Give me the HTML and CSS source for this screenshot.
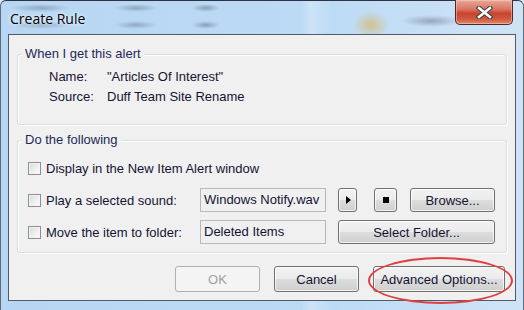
FILE: index.html
```html
<!DOCTYPE html>
<html lang="en">
<head>
    <meta charset="UTF-8">
    <title>Create Rule</title>
    <link rel="stylesheet" href="styles.css">
</head>
<body>
    <div class="window">
        <!-- Title bar -->
        <div class="titlebar">
            <span class="title">Create Rule</span>
            <button class="close" aria-label="Close">
                <svg width="17" height="13" viewBox="0 0 17 13">
                    <path d="M3 2 L14 11 M14 2 L3 11" stroke="#3b3b4a" stroke-width="4.6" stroke-linecap="square" fill="none"/>
                    <path d="M3 2 L14 11 M14 2 L3 11" stroke="#ffffff" stroke-width="2.6" stroke-linecap="square" fill="none"/>
                </svg>
            </button>
        </div>

        <div class="client">
            <!-- Alert details -->
            <div class="group alert-group">
                <span class="legend">When I get this alert</span>
                <div class="info">
                    <span>Name:</span><span>"Articles Of Interest"</span>
                    <span>Source:</span><span>Duff Team Site Rename</span>
                </div>
            </div>

            <!-- Actions -->
            <div class="group action-group">
                <span class="legend">Do the following</span>
                <div class="actions">
                    <div class="action-row">
                        <label class="check"><span class="box"></span>Display in the New Item Alert window</label>
                    </div>
                    <div class="action-row">
                        <label class="check"><span class="box"></span>Play a selected sound:</label>
                        <span class="field">Windows Notify.wav</span>
                        <button class="btn btn-play" aria-label="Play"><span class="play-icon"></span></button>
                        <button class="btn btn-stop" aria-label="Stop"><span class="stop-icon"></span></button>
                        <button class="btn btn-browse">Browse...</button>
                    </div>
                    <div class="action-row">
                        <label class="check"><span class="box"></span>Move the item to folder:</label>
                        <span class="field">Deleted Items</span>
                        <button class="btn btn-folder">Select Folder...</button>
                    </div>
                </div>
            </div>

            <!-- Dialog buttons -->
            <div class="dialog-buttons">
                <button class="btn btn-dialog" disabled>OK</button>
                <button class="btn btn-dialog">Cancel</button>
                <button class="btn btn-advanced">Advanced Options...<span class="ring"></span></button>
            </div>
        </div>
    </div>
</body>
</html>
```

FILE: styles.css
```css
body {
    margin: 0;
    padding: 0;
    background: #dbe8f4;
    font-family: "Liberation Sans", Arial, sans-serif;
    font-size: 13px;
    color: #141432;
}

.window {
    width: 524px;
    height: 310px;
    box-sizing: border-box;
    padding: 0 7px 9px 7px;
    border-top: 1px solid #2d3440;
    border-left: 1px solid #5d6b7a;
    border-right: 1px solid #5d6b7a;
    border-radius: 6px 6px 0 0;
    display: flex;
    flex-direction: column;
    background:
        radial-gradient(30px 4px at 40px 7px, rgba(95, 110, 130, 0.45), transparent),
        radial-gradient(22px 4px at 135px 7px, rgba(95, 110, 130, 0.45), transparent),
        radial-gradient(14px 4px at 205px 7px, rgba(95, 110, 130, 0.55), transparent),
        radial-gradient(30px 4px at 40px 24px, rgba(95, 110, 130, 0.4), transparent),
        radial-gradient(22px 4px at 135px 24px, rgba(95, 110, 130, 0.45), transparent),
        radial-gradient(14px 4px at 205px 24px, rgba(95, 110, 130, 0.55), transparent),
        radial-gradient(18px 14px at 370px 24px, rgba(214, 184, 112, 0.75), transparent),
        radial-gradient(30px 6px at 430px 20px, rgba(90, 100, 120, 0.45), transparent),
        linear-gradient(to right, transparent 300px, rgba(255, 255, 255, 0.25) 310px, transparent 330px),
        linear-gradient(to right, #b7d6f3 0, #bcdaf5 60%, #cfe3f6 100%);
}

/* ---------- title bar ---------- */

.titlebar {
    height: 33px;
    margin: 0 -7px;
    padding: 0 10px 0 9px;
    display: flex;
    justify-content: space-between;
    align-items: flex-start;
}

.title {
    font-family: "Open Sans", "Noto Sans", sans-serif;
    font-size: 14px;
    line-height: 36px;
    color: #000;
    text-shadow: 0 0 6px #e8f3fc, 0 0 3px #e8f3fc;
}

.close {
    width: 58px;
    height: 25px;
    margin-top: -1px;
    padding: 0;
    border: 1px solid #4a2b2b;
    border-top: none;
    border-radius: 0 0 5px 5px;
    background: linear-gradient(to bottom, #e9a99b 0, #d8735f 40%, #c7452d 55%, #cf5a3f 80%, #e08a6a 100%);
    box-shadow: inset 0 0 0 1px rgba(255, 220, 210, 0.45);
    display: flex;
    align-items: center;
    justify-content: center;
}

/* ---------- client area ---------- */

.client {
    flex: 1;
    background: #f0f0f0;
    border: 1px solid #4f5b68;
    padding: 19px 8px 8px 8px;
    display: flex;
    flex-direction: column;
}

.group {
    border: 1px solid #d5dfe5;
    border-radius: 3px;
    box-shadow: inset 1px 1px 0 #ffffff, 1px 1px 0 #ffffff;
}

.legend {
    display: block;
    width: fit-content;
    margin: -9px 0 0 4px;
    padding: 0 3px;
    line-height: 16px;
    background: #f0f0f0;
    color: #1d2a5a;
}

.alert-group {
    height: 71px;
    box-sizing: border-box;
}

.info {
    margin-top: 5px;
    padding-left: 31px;
    display: grid;
    grid-template-columns: 58px auto;
    line-height: 20px;
}

.action-group {
    margin-top: 15px;
    padding-bottom: 8px;
}

.actions {
    margin-top: 8px;
    padding: 0 11px 0 10px;
    display: flex;
    flex-direction: column;
    gap: 8px;
}

.action-row {
    height: 24px;
    display: flex;
    align-items: center;
}

.check {
    flex: none;
    min-width: 172px;
    display: flex;
    align-items: center;
    gap: 5px;
    white-space: nowrap;
}

.box {
    width: 11px;
    height: 11px;
    border: 1px solid #8e8f8f;
    background: linear-gradient(135deg, #d7d9dc 0, #f3f3f3 70%, #fafafa 100%);
    box-shadow: inset 0 0 0 1px #f4f4f4;
}

.field {
    flex: none;
    width: 121px;
    height: 22px;
    padding-left: 3px;
    border: 1px solid #b7b9bd;
    line-height: 22px;
    white-space: nowrap;
    overflow: hidden;
}

/* ---------- buttons ---------- */

.btn {
    flex: none;
    height: 24px;
    padding: 0;
    border: 1px solid #707070;
    border-radius: 3px;
    background: linear-gradient(to bottom, #f2f2f2 0, #ebebeb 50%, #dddddd 51%, #cfcfcf 100%);
    box-shadow: inset 0 0 0 1px rgba(255, 255, 255, 0.7);
    font-family: inherit;
    font-size: 13px;
    color: #141432;
    display: flex;
    align-items: center;
    justify-content: center;
}

.btn-play {
    width: 19px;
    margin-left: 12px;
}

.play-icon {
    width: 0;
    height: 0;
    border-top: 4px solid transparent;
    border-bottom: 4px solid transparent;
    border-left: 5px solid #000;
    margin-left: 1px;
}

.btn-stop {
    width: 23px;
    margin-left: 17px;
}

.stop-icon {
    width: 6px;
    height: 6px;
    background: #000;
}

.btn-browse {
    width: 85px;
    margin-left: 13px;
}

.btn-folder {
    width: 157px;
    margin-left: 12px;
}

.dialog-buttons {
    margin-top: 13px;
    padding-right: 2px;
    display: flex;
    justify-content: flex-end;
    gap: 14px;
}

.dialog-buttons .btn {
    height: 26px;
}

.btn-dialog {
    width: 85px;
}

.btn:disabled {
    border-color: #adb2b5;
    background: #f4f4f4;
    box-shadow: none;
    color: #a0a0a0;
}

.btn-advanced {
    width: 132px;
    position: relative;
}

.ring {
    position: absolute;
    top: -10px;
    left: -6px;
    right: -9px;
    bottom: -13px;
    border: 2.5px solid #e0403f;
    border-radius: 50%;
}
```
